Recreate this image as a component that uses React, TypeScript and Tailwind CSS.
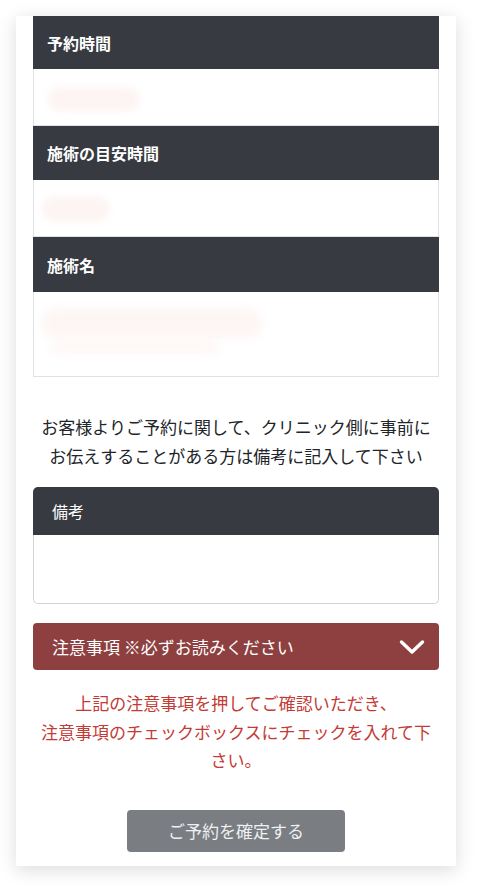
const FONT = "font-['Noto_Sans_CJK_JP','Noto_Sans',sans-serif]";

function InfoBlock({
  title,
  headH,
  bodyH,
  blur,
}: {
  title: string;
  headH: string;
  bodyH: string;
  blur: React.ReactNode;
}) {
  return (
    <div>
      <div className={`${headH} flex items-center bg-[#373a40] px-[14px]`}>
        <span className="text-[16px] font-bold text-white">{title}</span>
      </div>
      <div className={`${bodyH} border-x border-b border-[#dee2e6] bg-white px-[6px] pt-[12px]`}>
        {blur}
      </div>
    </div>
  );
}

export default function App() {
  return (
    <div className={`min-h-[889px] bg-white pt-4 pb-6 ${FONT}`}>
      <div className="ml-4 w-[440px] bg-white px-[17px] pb-[14px] shadow-[0_4px_18px_rgba(0,0,0,0.14)]">
        <InfoBlock
          title="予約時間"
          headH="h-[53px]"
          bodyH="h-[57px]"
          blur={<div className="ml-[8px] mt-[6px] h-[24px] w-[92px] rounded-full bg-[#fdf5f3] blur-[3px]" />}
        />
        <InfoBlock
          title="施術の目安時間"
          headH="h-[54px]"
          bodyH="h-[57px]"
          blur={<div className="ml-[2px] mt-[4px] h-[26px] w-[68px] rounded-full bg-[#fdf5f3] blur-[3px]" />}
        />
        <InfoBlock
          title="施術名"
          headH="h-[55px]"
          bodyH="h-[85px]"
          blur={
            <div className="flex flex-col gap-[2px]">
              <div className="ml-[2px] mt-[4px] h-[30px] w-[220px] rounded-full bg-[#fdf6f4] blur-[4px]" />
              <div className="ml-[10px] h-[14px] w-[170px] rounded-full bg-[#fef8f6] blur-[4px]" />
            </div>
          }
        />

        <p className="mt-[35px] text-center text-[17px] leading-[29px] text-[#212529]">
          お客様よりご予約に関して、クリニック側に事前に
          <br />
          お伝えすることがある方は備考に記入して下さい
        </p>

        <div className="mt-[17px]">
          <div className="flex h-[48px] items-center rounded-t-[5px] bg-[#373a40] px-[19px]">
            <span className="text-[16px] text-white">備考</span>
          </div>
          <div className="h-[69px] rounded-b-[5px] border border-t-0 border-[#ced4da] bg-white" />
        </div>

        <button className="mt-[19px] flex h-[47px] w-full items-center justify-between rounded-[4px] bg-[#8e4040] pl-[19px] pr-[14px] text-white">
          <span className="text-[17px]">注意事項 ※必ずお読みください</span>
          <svg width="26" height="16" viewBox="0 0 26 16" fill="none">
            <polyline
              points="2.5,3 13,13 23.5,3"
              stroke="white"
              strokeWidth="3.4"
              strokeLinecap="round"
              strokeLinejoin="round"
            />
          </svg>
        </button>

        <p className="mt-[19px] text-center text-[17px] leading-[28.5px] text-[#c43a35]">
          上記の注意事項を押してご確認いただき、
          <br />
          注意事項のチェックボックスにチェックを入れて下さい。
        </p>

        <div className="mt-[35px] flex justify-center">
          <button className="h-[42px] w-[218px] rounded-[4px] bg-[#7a7e82] text-[17px] text-[#eef0f2]">
            ご予約を確定する
          </button>
        </div>
      </div>
    </div>
  );
}
